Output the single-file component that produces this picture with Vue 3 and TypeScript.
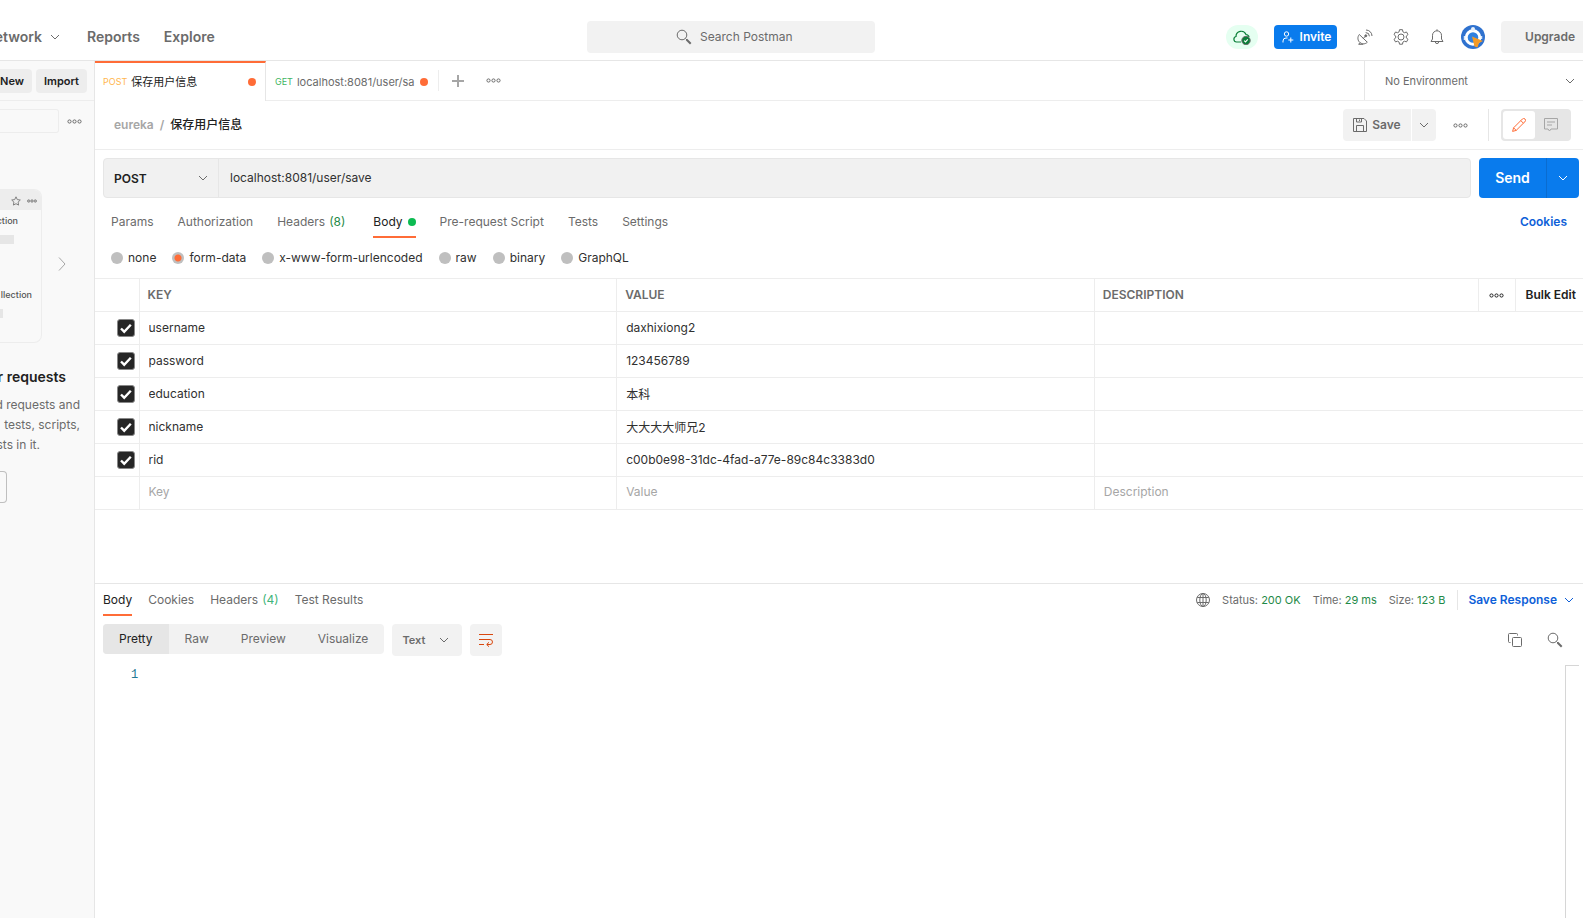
<script setup lang="ts">
import { ref } from 'vue'

interface Row { key: string; value: string; on: boolean }
interface Tab { label: string; count?: number; dot?: boolean }

const rows = ref<Row[]>([
  { key: 'username', value: 'daxhixiong2', on: true },
  { key: 'password', value: '123456789', on: true },
  { key: 'education', value: '本科', on: true },
  { key: 'nickname', value: '大大大大师兄2', on: true },
  { key: 'rid', value: 'c00b0e98-31dc-4fad-a77e-89c84c3383d0', on: true },
])
const requestTabs: Tab[] = [
  { label: 'Params' },
  { label: 'Authorization' },
  { label: 'Headers', count: 8 },
  { label: 'Body', dot: true },
  { label: 'Pre-request Script' },
  { label: 'Tests' },
  { label: 'Settings' },
]
const responseTabs: Tab[] = [
  { label: 'Body' },
  { label: 'Cookies' },
  { label: 'Headers', count: 4 },
  { label: 'Test Results' },
]
const bodyModes = ['none', 'form-data', 'x-www-form-urlencoded', 'raw', 'binary', 'GraphQL']
const views = ['Pretty', 'Raw', 'Preview', 'Visualize']
const stats = [
  { label: 'Status:', value: '200 OK' },
  { label: 'Time:', value: '29 ms' },
  { label: 'Size:', value: '123 B' },
]
const requestTab = ref('Body')
const responseTab = ref('Body')
const bodyMode = ref('form-data')
const view = ref('Pretty')
const url = ref('localhost:8081/user/save')
</script>

<template>
  <div class="app">
    <header class="top">
      <nav class="top-nav">
        <a href="#" class="network">etwork
          <svg class="chev" viewBox="0 0 10 10"><path d="M1 3l4 4 4-4" /></svg>
        </a>
        <a href="#">Reports</a>
        <a href="#">Explore</a>
      </nav>
      <button class="search">
        <svg class="i16" viewBox="0 0 16 16"><circle cx="6" cy="6" r="4.800" /><path d="M9.500 9.500l1.500 1.500" /><path d="M10.500 10.500l4.200 4.200" stroke-width="2" /></svg>
        Search Postman
      </button>
      <div class="top-right">
        <button class="sync" aria-label="Sync status">
          <svg viewBox="0 0 18 16"><path d="M8 13H3.5a2.8 2.8 0 0 1-.5-5.500A5.200 5.200 0 0 1 13 5.500c1.600.2 2.800 1.200 3 2.500" fill="none" stroke="#0a7f38" stroke-width="1.200" /><circle cx="13" cy="11.500" r="4.200" fill="#0a7f38" /><path d="M11.200 11.600l1.300 1.300 2.300-2.500" fill="none" stroke="#fff" stroke-width="1.100" /></svg>
        </button>
        <button class="invite">
          <svg viewBox="0 0 12 12"><circle cx="4.500" cy="3" r="2.200" /><path d="M1 11.500V10a3 3 0 0 1 3-3h1.500M8.800 6.500v5M6.300 9h5" /></svg>
          Invite
        </button>
        <div class="top-icons">
          <button aria-label="Capture requests">
            <svg class="i16" viewBox="0 0 16 16"><path d="M2.300 5.500c-2.200 2.600-1.600 6.200.6 8 2.300 1.900 5.600 1.700 7.400-.3zM6.300 9.400L8.600 7M3 13.600L1.700 15.300h4.500M8.700 3.600a3.700 3.700 0 0 1 3.700 3.700M9 1a6 6 0 0 1 6 6" /><circle cx="8.800" cy="6.800" r="1" fill="#6b6b6b" /></svg>
          </button>
          <button aria-label="Settings">
            <svg class="i16" viewBox="0 0 16 16"><path d="M6.500.7h3l.4 2.100 1.500.9 2.100-.7 1.500 2.600-1.700 1.400v1.900l1.700 1.400-1.500 2.600-2.100-.7-1.500.9-.4 2.100h-3l-.4-2.100-1.500-.9-2.100.7L1 10.300l1.700-1.400V7L1 5.600 2.500 3l2.100.7 1.500-.9z" /><circle cx="8" cy="8" r="3" /></svg>
          </button>
          <button aria-label="Notifications">
            <svg class="i16" viewBox="0 0 16 16"><path d="M8 1.800a4.500 4.500 0 0 0-4.500 4.500V10L2 12.500h12L12.500 10V6.300A4.500 4.500 0 0 0 8 1.800zM8 .3v1.500M6.300 12.700a1.700 1.900 0 0 0 3.400 0" /></svg>
          </button>
          <button aria-label="Account">
            <svg class="avatar" viewBox="0 0 24 24"><circle cx="12" cy="12" r="12" fill="#2f72cf" /><circle cx="12" cy="12.500" r="6.800" fill="#2f80e0" stroke="#fff" stroke-width="3" /><circle cx="12" cy="4" r="2" fill="#e8f1fb" /><path d="M3.500 11v4M20.500 11v3" stroke="#dce9fa" stroke-width="1.500" /><path d="M11 11.500l11 4.500-4 2-1.500 4.500-3-1z" fill="#f39a26" /></svg>
          </button>
        </div>
        <button class="upgrade">Upgrade</button>
      </div>
    </header>

    <div class="body">
      <aside class="side">
        <div class="side-top">
          <button>New</button>
          <button>Import</button>
        </div>
        <div class="side-filter">
          <input aria-label="Filter" />
          <button aria-label="More options"><svg class="dots" viewBox="0 0 15 5"><circle cx="2.500" cy="2.500" r="1.600" /><circle cx="7.500" cy="2.500" r="1.600" /><circle cx="12.500" cy="2.500" r="1.600" /></svg></button>
        </div>
        <div class="side-preview">
          <div class="card">
            <div class="card-head">
              <svg viewBox="0 0 10 10" class="star"><path d="M5 .8l1.300 2.800 3 .4-2.200 2.100.5 3L5 7.700 2.400 9.100l.5-3L.7 4l3-.4z" /></svg>
              <svg viewBox="0 0 10 4" class="mini"><circle cx="1.700" cy="2" r="1.200" /><circle cx="5" cy="2" r="1.200" /><circle cx="8.300" cy="2" r="1.200" /></svg>
            </div>
            <div class="card-item first"><span>ction</span><i></i></div>
            <div class="card-item second"><span>llection</span><i></i></div>
          </div>
          <button class="next" aria-label="Next"><svg viewBox="0 0 8 14"><path d="M1 .5l6 6.500-6 6.500" /></svg></button>
        </div>
        <h3>r requests</h3>
        <p><span>d requests and</span><span>tests, scripts,</span><span class="last">sts in it.</span></p>
        <button class="side-action" aria-label="Create collection"></button>
      </aside>

      <main class="main">
        <div class="tabs">
          <button class="tab active"><span class="m post">POST</span><span class="name">保存用户信息</span><i class="dot"></i></button>
          <button class="tab"><span class="m get">GET</span><span class="name">localhost:8081/user/sa</span><i class="dot"></i></button>
          <span class="tab-line"></span>
          <button class="plus" aria-label="New tab"><svg viewBox="0 0 12 12"><path d="M6 0v12M0 6h12" /></svg></button>
          <button class="tab-more" aria-label="Tab options"><svg class="dots" viewBox="0 0 15 5"><circle cx="2.500" cy="2.500" r="1.600" /><circle cx="7.500" cy="2.500" r="1.600" /><circle cx="12.500" cy="2.500" r="1.600" /></svg></button>
          <div class="pick env">
            <select aria-label="Environment"><option>No Environment</option></select>
            <svg class="chev" viewBox="0 0 10 10"><path d="M1 3l4 4 4-4" /></svg>
          </div>
        </div>

        <div class="crumbs">
          <a href="#">eureka</a><span class="slash">/</span><strong>保存用户信息</strong>
          <div class="crumb-actions">
            <button class="save"><svg viewBox="0 0 14 14"><path d="M.5.5h10.500l2.500 2.500v10.500H.5zM3.500.5v3.500h5V.5M3.500 13.500V7.500h7v6M6.500 1.500v1.500" /></svg>Save</button>
            <button class="save-more" aria-label="Save options"><svg class="chev" viewBox="0 0 10 10"><path d="M1 3l4 4 4-4" /></svg></button>
            <button class="more" aria-label="More actions"><svg class="dots" viewBox="0 0 15 5"><circle cx="2.500" cy="2.500" r="1.600" /><circle cx="7.500" cy="2.500" r="1.600" /><circle cx="12.500" cy="2.500" r="1.600" /></svg></button>
            <span class="vline"></span>
            <div class="toggle">
              <button class="on" aria-label="Edit"><svg viewBox="0 0 14 14"><path d="M.6 13.400l1-3.600L10.400 1a1.500 1.500 0 0 1 2.600 2.600L4.200 12.400zM8.800 2.600l2.600 2.600M1.600 9.800l2.600 2.600" stroke="#ff6c37" /></svg></button>
              <button aria-label="Comments"><svg viewBox="0 0 14 14"><path d="M.5.5h13v10.500H7L5.500 13 4 11H.5zM3 4h8M3 7h5" stroke="#a6a6a6" /></svg></button>
            </div>
          </div>
        </div>

        <div class="url-row">
          <div class="url-box">
            <div class="pick method">
              <select aria-label="Method"><option>POST</option></select>
              <svg class="chev" viewBox="0 0 10 10"><path d="M1 3l4 4 4-4" /></svg>
            </div>
            <input v-model="url" aria-label="Request URL" />
          </div>
          <div class="send">
            <button>Send</button>
            <button aria-label="Send options"><svg class="chev" viewBox="0 0 10 10"><path d="M1 3l4 4 4-4" /></svg></button>
          </div>
        </div>

        <nav class="req-tabs">
          <button v-for="t in requestTabs" :key="t.label" :class="{ active: requestTab === t.label }" @click="requestTab = t.label">
            {{ t.label }}<span v-if="t.count" class="count">({{ t.count }})</span><i v-if="t.dot" class="green"></i>
          </button>
          <a href="#">Cookies</a>
        </nav>

        <div class="modes">
          <label v-for="m in bodyModes" :key="m"><input v-model="bodyMode" type="radio" name="mode" :value="m" />{{ m }}</label>
        </div>

        <table class="params">
          <colgroup><col class="c-check" /><col class="c-key" /><col class="c-key" /><col /><col class="c-more" /><col class="c-bulk" /></colgroup>
          <thead>
            <tr>
              <th></th><th>KEY</th><th>VALUE</th><th>DESCRIPTION</th>
              <th class="center"><button aria-label="Column options"><svg class="dots" viewBox="0 0 15 5"><circle cx="2.500" cy="2.500" r="1.600" /><circle cx="7.500" cy="2.500" r="1.600" /><circle cx="12.500" cy="2.500" r="1.600" /></svg></button></th>
              <th class="bulk"><button>Bulk Edit</button></th>
            </tr>
          </thead>
          <tbody>
            <tr v-for="r in rows" :key="r.key">
              <td class="check"><label><input v-model="r.on" type="checkbox" :aria-label="'Include ' + r.key" /><svg v-if="r.on" viewBox="0 0 18 18"><path d="M4 9.500l3.200 3.200 6.600-7" /></svg></label></td>
              <td><input v-model="r.key" aria-label="Key" /></td>
              <td><input v-model="r.value" aria-label="Value" /></td>
              <td colspan="3"><input aria-label="Description" /></td>
            </tr>
            <tr class="blank">
              <td></td>
              <td><input placeholder="Key" aria-label="New key" /></td>
              <td><input placeholder="Value" aria-label="New value" /></td>
              <td colspan="3"><input placeholder="Description" aria-label="New description" /></td>
            </tr>
          </tbody>
        </table>

        <section class="response">
          <div class="res-head">
            <nav>
              <button v-for="t in responseTabs" :key="t.label" :class="{ active: responseTab === t.label }" @click="responseTab = t.label">
                {{ t.label }}<span v-if="t.count" class="count">({{ t.count }})</span>
              </button>
            </nav>
            <div class="stats">
              <svg class="globe" viewBox="0 0 14 14"><circle cx="7" cy="7" r="6.500" /><ellipse cx="7" cy="7" rx="3.200" ry="6.500" /><path d="M1.200 4.500h11.600M1.200 9.500h11.600M7 .5v13" /></svg>
              <span v-for="s in stats" :key="s.label">{{ s.label }} <b>{{ s.value }}</b></span>
              <i class="bar"></i>
              <button class="save-res">Save Response<svg class="chev" viewBox="0 0 10 10"><path d="M1 3l4 4 4-4" /></svg></button>
            </div>
          </div>
          <div class="res-tools">
            <div class="seg">
              <button v-for="v in views" :key="v" :class="{ active: view === v }" @click="view = v">{{ v }}</button>
            </div>
            <div class="pick format">
              <select aria-label="Format"><option>Text</option></select>
              <svg class="chev" viewBox="0 0 10 10"><path d="M1 3l4 4 4-4" /></svg>
            </div>
            <button class="wrap" aria-label="Wrap lines"><svg viewBox="0 0 14 14"><path d="M0 1.500h14M0 6.500h11a2.500 2.500 0 0 1 0 5H8M0 11.500h5M10 9.300l-2.300 2.200 2.300 2.200" /></svg></button>
            <div class="res-icons">
              <button aria-label="Copy"><svg class="i16" viewBox="0 0 16 16"><rect x="5.500" y="5.500" width="9" height="9" rx="1" /><path d="M3.500 10.500h-1a1 1 0 0 1-1-1v-7a1 1 0 0 1 1-1h7a1 1 0 0 1 1 1v1" /></svg></button>
              <button aria-label="Find"><svg class="i16" viewBox="0 0 16 16"><circle cx="6" cy="6" r="4.800" /><path d="M9.500 9.500l1.500 1.500" /><path d="M10.500 10.500l4.200 4.200" stroke-width="2" /></svg></button>
            </div>
          </div>
          <div class="editor">
            <span class="line">1</span>
            <div class="ruler"></div>
          </div>
        </section>
      </main>
    </div>
  </div>
</template>

<style>
body { margin: 0; background: #fff; }
</style>

<style scoped>
.app {
  display: flex;
  flex-direction: column;
  height: 100vh;
  overflow: hidden;
  font: 12px/16px Inter, "Noto Sans CJK SC", sans-serif;
  color: #212121;
}
.app *, .app *::before, .app *::after { box-sizing: border-box; }
button, input, select { font: inherit; color: inherit; background: none; border: 0; padding: 0; margin: 0; border-radius: 0; outline: none; }
button { display: flex; align-items: center; justify-content: center; white-space: nowrap; flex-shrink: 0; }
a { text-decoration: none; color: inherit; }
svg { fill: none; stroke: #6b6b6b; stroke-width: 1; display: block; flex-shrink: 0; }
.chev { width: 10px; height: 10px; }
.i16 { width: 16px; height: 16px; }
.dots { width: 15px; height: 5px; }
select { appearance: none; width: 100%; height: 100%; }
.pick { position: relative; display: flex; align-items: center; flex-shrink: 0; }
.pick .chev { position: absolute; pointer-events: none; }

.top { display: flex; align-items: center; height: 61px; padding-top: 13px; border-bottom: 1px solid #e6e6e6; flex-shrink: 0; }
.top-nav { display: flex; flex: 0 0 37.1%; gap: 24px; font-size: 14px; font-weight: 600; color: #6b6b6b; overflow: hidden; }
.network { display: flex; align-items: center; justify-content: flex-end; gap: 8px; width: 63px; padding-right: 3px; white-space: nowrap; }
.search { width: 288px; height: 32px; gap: 8px; padding-left: 6px; background: #f2f2f2; border-radius: 4px; color: #6b6b6b; }
.top-right { display: flex; align-items: center; margin-left: auto; gap: 16px; }
.sync { width: 32px; height: 24px; border-radius: 12px; background: #e5fff1; }
.sync svg { width: 18px; height: 16px; }
.invite { width: 63px; height: 24px; gap: 6px; padding-left: 2px; border-radius: 4px; background: #097bed; color: #fff; font-size: 12px; font-weight: 600; }
.invite svg { width: 12px; height: 12px; stroke: #fff; }
.top-icons { display: flex; gap: 12px; }
.top-icons button { width: 24px; height: 24px; }
.avatar { width: 24px; height: 24px; stroke: none; }
.upgrade { width: 82px; height: 32px; justify-content: flex-end; padding-right: 8px; background: #f2f2f2; border-radius: 4px 0 0 4px; color: #6b6b6b; font-weight: 600; }

.body { display: flex; flex: 1; min-height: 0; }
.side { width: 95px; flex-shrink: 0; overflow: hidden; background: #f9f9f9; border-right: 1px solid #e6e6e6; }
.side-top { display: flex; align-items: center; justify-content: flex-end; gap: 4px; height: 40px; padding-right: 7px; border-bottom: 1px solid #ededed; }
.side-top button { height: 24px; padding: 0 8px; background: #ededed; border-radius: 4px; font-size: 11px; font-weight: 600; }
.side-filter { display: flex; align-items: center; gap: 8px; padding-top: 8px; }
.side-filter input { width: 59px; height: 24px; border: 1px solid #ededed; border-left: 0; border-radius: 0 3px 3px 0; }
.side-preview { display: flex; align-items: center; gap: 16px; margin-top: 56px; }
.card { width: 42px; height: 154px; border: 1px solid #ededed; border-left: 0; border-radius: 0 8px 8px 0; overflow: hidden; }
.card-head { display: flex; align-items: center; justify-content: flex-end; gap: 6px; height: 20px; padding: 2px 4px 0 0; background: #ededed; }
.star { width: 10px; height: 10px; stroke: #808080; }
.mini { width: 10px; height: 4px; stroke: #8a8a8a; fill: #bbb; }
.card-item { display: flex; flex-direction: column; align-items: flex-start; height: 74px; padding-top: 5px; font-size: 9px; font-weight: 500; line-height: 12px; color: #555; }
.card-item span { display: flex; justify-content: flex-end; }
.first span { width: 18px; }
.second span { width: 32px; }
.card-item i { height: 9px; margin-top: 8px; background: #e6e6e6; }
.first i { width: 14px; }
.second i { width: 3px; }
.next { padding-bottom: 4px; }
.next svg { width: 8px; height: 14px; stroke: #a6a6a6; }
h3 { margin: 24px 28px 0 0; font-size: 14px; line-height: 20px; font-weight: 600; display: flex; justify-content: flex-end; white-space: nowrap; }
p { margin: 8px 14px 0 0; line-height: 20px; color: #6b6b6b; }
p span { display: flex; justify-content: flex-end; white-space: nowrap; }
p .last { padding-right: 40px; }
.side-action { width: 7px; height: 32px; margin-top: 16px; border: 1px solid #bfbfbf; border-left: 0; border-radius: 0 4px 4px 0; }

.main { display: flex; flex-direction: column; flex: 1; min-width: 0; }
.tabs { display: flex; align-items: center; height: 40px; border-bottom: 1px solid #ededed; flex-shrink: 0; }
.tab { height: 40px; justify-content: flex-start; gap: 4px; padding: 2px 10px 0 9px; color: #6b6b6b; font-size: 11px; }
.tab.active { width: 171px; padding: 0 9px 0 8px; border-top: 2px solid #ff6c37; border-right: 1px solid #e6e6e6; background: #fff; color: #212121; }
.active .dot { margin-left: auto; }
.m { font-size: 9px; }
.post { color: #ffb64e; }
.get { color: #3fb564; }
.dot { width: 8px; height: 8px; border-radius: 50%; background: #ff6c37; margin-left: 1px; }
.tab-line { width: 1px; height: 21px; background: #ededed; }
.plus { width: 38px; height: 24px; }
.plus svg { width: 12px; height: 12px; stroke: #a6a6a6; stroke-width: 2; }
.tab-more { width: 34px; height: 24px; }
.env { width: 219px; height: 39px; margin-left: auto; border-left: 1px solid #e6e6e6; color: #6b6b6b; font-size: 11px; }
.env select { padding-left: 20px; }
.env .chev { right: 8px; }

.crumbs { display: flex; align-items: center; height: 49px; padding: 0 12px 0 19px; border-bottom: 1px solid #ededed; flex-shrink: 0; font-weight: 600; }
.crumbs a, .slash { color: #a6a6a6; }
.slash { margin: 0 6px; }
.crumbs strong { font-weight: 500; }
.crumb-actions { display: flex; align-items: center; margin-left: auto; }
.crumb-actions > button { height: 32px; background: #f2f2f2; }
.crumb-actions .save { width: 68px; gap: 5px; border-radius: 4px 0 0 4px; color: #6b6b6b; }
.save svg, .toggle svg { width: 14px; height: 14px; }
.crumb-actions .save-more { width: 24px; margin-left: 1px; border-radius: 0 4px 4px 0; }
.crumb-actions .more { width: 48px; background: none; }
.vline { width: 1px; height: 32px; margin: 0 12px 0 4px; background: #e6e6e6; }
.toggle { display: flex; padding: 2px 4px 2px 2px; background: #e6e6e6; border-radius: 4px; }
.toggle button { width: 32px; height: 28px; border-radius: 3px; }
.toggle .on { background: #fff; }

.url-row { display: flex; gap: 8px; padding: 8px 4px 0 8px; flex-shrink: 0; }
.url-box { display: flex; flex: 1; height: 40px; background: #f1f1f1; border: 1px solid #e6e6e6; border-radius: 4px; }
.url-box input { flex: 1; padding-left: 11px; min-width: 0; color: #303030; }
.method { width: 115px; border-right: 1px solid #e6e6e6; font-weight: 600; }
.method select { padding: 2px 0 0 10px; }
.method .chev { right: 10px; }
.send { display: flex; }
.send button { width: 67px; height: 40px; background: #097bed; color: #fff; font-size: 14px; font-weight: 600; border-radius: 4px 0 0 4px; }
.send button + button { width: 33px; border-left: 1px solid #0a6cd0; border-radius: 0 4px 4px 0; }
.send .chev { stroke: #fff; }

.req-tabs { display: flex; gap: 24px; height: 40px; padding: 8px 16px 0; flex-shrink: 0; color: #6b6b6b; }
.req-tabs button, .res-head nav button { height: 32px; padding-top: 2px; border-bottom: 2px solid transparent; }
.req-tabs .active, .res-head nav .active { border-bottom-color: #ff6c37; color: #212121; }
.req-tabs a { margin-left: auto; line-height: 32px; color: #0e5fd8; font-weight: 600; }
.req-tabs .count { margin-right: 4px; }
.count { margin-left: 4px; color: #1f8a48; }
.green { width: 8px; height: 8px; margin-left: 5px; border-radius: 50%; background: #0cbb52; }
.modes { display: flex; align-items: center; gap: 16px; height: 40px; padding: 0 16px; flex-shrink: 0; color: #303030; }
.modes label { display: flex; align-items: center; gap: 5px; }
.modes input { appearance: none; width: 12px; height: 12px; border-radius: 50%; background: #bfbfbf; }
.modes input:checked { background: radial-gradient(circle, #ff6c37 3px, #bfbfbf 4px); }

.params { width: 100%; table-layout: fixed; border-collapse: collapse; flex-shrink: 0; color: #303030; }
.c-check { width: 44px; }
.c-key { width: 32.1%; }
.c-more { width: 37px; }
.c-bulk { width: 68px; }
.params th, .params td { height: 33px; padding: 0 8px; border: 1px solid #ededed; border-width: 1px 0 1px 1px; text-align: left; }
.params tr > :first-child { border-left: 0; }
.params th { font-weight: 600; color: #6b6b6b; }
.params .center, .params .bulk { padding: 0 0 0 10px; color: #212121; }
.params .center svg { stroke: #212121; }
.bulk button { font-weight: 600; }
.params td input { width: 100%; height: 24px; padding: 0 0 2px 1px; display: block; }
.params .blank input { padding-bottom: 4px; }
.params td input::placeholder { color: #a6a6a6; opacity: 1; }
.params .check { padding: 0 4px 0 22px; }
.check label { display: grid; width: 18px; height: 18px; }
.params .check input { grid-area: 1 / 1; appearance: none; width: 18px; height: 18px; border: 1px solid #888; border-radius: 3px; }
.params .check input:checked { background: #262626; }
.check svg { grid-area: 1 / 1; width: 18px; height: 18px; stroke: #fff; stroke-width: 2.4; pointer-events: none; z-index: 1; }

.response { display: flex; flex-direction: column; flex: 1; margin-top: 73px; border-top: 1px solid #e6e6e6; min-height: 0; }
.res-head { display: flex; justify-content: space-between; height: 32px; padding: 0 9px 0 8px; color: #6b6b6b; }
.res-head nav { display: flex; gap: 16px; }
.res-head .count { color: #3fb57a; }
.stats { display: flex; align-items: center; gap: 12px; font-size: 11px; white-space: nowrap; }
.stats b { font-weight: 400; color: #1f8a48; }
.globe { width: 14px; height: 14px; }
.bar { width: 1px; height: 20px; background: #e6e6e6; }
.save-res { gap: 7px; margin-left: -2px; color: #0e5fd8; font-size: 12px; font-weight: 600; }
.save-res .chev { stroke: #0e5fd8; }
.res-tools { display: flex; gap: 8px; padding: 8px 12px 0 8px; }
.seg { display: flex; height: 30px; background: #f2f2f2; border-radius: 4px; overflow: hidden; color: #6b6b6b; }
.seg button { padding: 0 16px; }
.seg .active { background: #e6e6e6; color: #212121; }
.format { width: 70px; height: 32px; background: #f2f2f2; border-radius: 4px; color: #6b6b6b; font-size: 11px; font-weight: 600; }
.format select { padding-left: 10px; }
.format .chev { right: 13px; }
.wrap { width: 32px; height: 32px; background: #f2f2f2; border-radius: 4px; }
.wrap svg { width: 14px; height: 14px; stroke: #d9480f; }
.res-icons { display: flex; gap: 8px; margin-left: auto; }
.res-icons button { width: 32px; height: 32px; }
.editor { display: flex; justify-content: space-between; flex: 1; margin-top: 9px; padding: 0 4px 0 36px; min-height: 0; }
.line { font: 12px/20px "Liberation Mono", monospace; color: #237893; }
.ruler { width: 14px; border: 1px solid #d6d6d6; border-width: 1px 0 0 1px; }
</style>
